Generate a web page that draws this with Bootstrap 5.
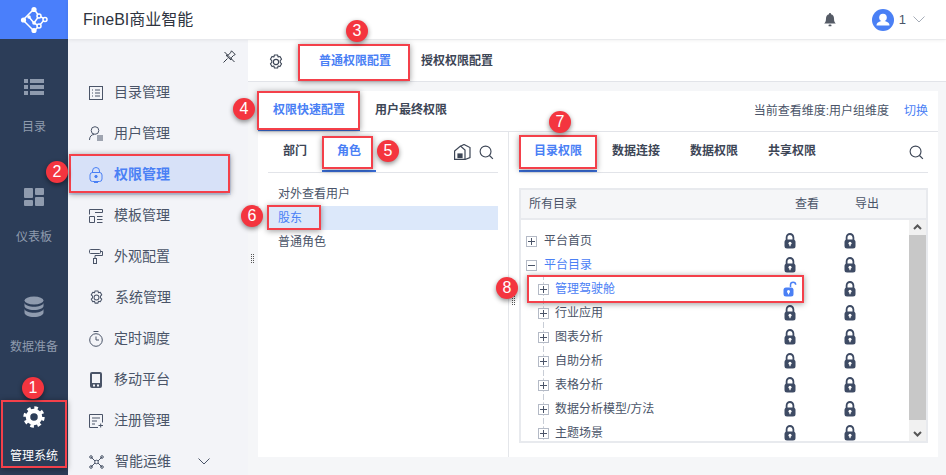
<!DOCTYPE html>
<html lang="zh-CN">
<head>
  <meta charset="UTF-8" />
  <meta name="viewport" content="width=device-width, initial-scale=1" />
  <title>FineBI商业智能</title>
  <link href="https://cdn.jsdelivr.net/npm/bootstrap@5.3.0/dist/css/bootstrap.min.css" rel="stylesheet" />
  <style>
    body {
      width: 946px;
      height: 475px;
      overflow: hidden;
      position: relative;
      background-color: #f5f6f8;
      color: #4a5468;
      font-family: "Liberation Sans", "Noto Sans CJK SC", sans-serif;
      font-size: 12px;
    }
    /* left dark rail */
    .rail { width: 68px; height: 475px; background-color: #2c3d58; flex: none; overflow: hidden; }
    .rail-logo { height: 39px; background-color: #4a7ffb; flex: none; }
    .rail-item { height: 110px; padding-top: 37px; color: #8f9bae; gap: 20px; flex: none; }
    .rail-item svg { height: 22px; }
    .rail-item.is-on { color: #fff; gap: 19px; }
    /* top bar */
    .topbar { height: 39px; background-color: #fff; box-shadow: 0 1px 4px rgba(0, 0, 0, .08); padding: 0 21px 0 15px; position: relative; z-index: 1; }
    .brand { font-size: 16px; color: #2e3440; }
    .bell-icon { margin-right: 20px; }
    .user-num { color: #4a5468; margin: 0 7px 0 5px; font-size: 13px; }
    /* second menu */
    .side-menu { width: 180px; height: 436px; background-color: #f3f4f8; flex: none; overflow: hidden; }
    .pin-row { height: 33px; padding: 11px 12px 0 0; }
    .menu-row { height: 41px; padding-left: 20px; gap: 11px; font-size: 14px; color: #4a5468; width: 162px; margin-left: 1px; }
    .menu-row svg { flex: none; }
    .menu-row.is-on { background-color: #d7e1f8; color: #4a80f5; font-weight: 700; }
    /* main part */
    .main-tabs { height: 42px; background-color: #fff; border-bottom: 1px solid #e2e4e9; padding: 2px 0 0 20px; margin-top: 1px; }
    .gear-btn { margin-right: 20px; color: #3d4656; }
    .tab-item { display: flex; align-items: center; justify-content: center; font-weight: 700; color: #3d4656; border-bottom: 2px solid transparent; height: 100%; }
    .tab-item.is-on { color: #4a80f5; border-bottom-color: #3a6fdc; }
    .tab-a { width: 102px; }
    .tab-b { width: 87px; padding-left: 15px; }
    .panel { margin: 9px 8px 0 10px; height: 366px; background-color: #fff; }
    .panel-head { height: 41px; border-bottom: 1px solid #e2e4e9; padding-right: 10px; }
    .panel-note { color: #4a5468; }
    .panel-link { color: #4a80f5; margin-left: 15px; }
    .col-left { width: 251px; border-right: 1px solid #e4e6ea; padding: 0 10px; flex: none; height: 325px; }
    .col-right { padding: 0 10px; flex: 1; min-width: 0; }
    .sub-tabs { height: 41px; border-bottom: 1px solid #e2e4e9; }
    .tab-dept { width: 54px; }
    .tab-role { width: 54px; }
    .tab-wide { width: 78px; }
    .tab-plain { width: 78px; }
    .tool-icon { color: #3d4656; }
    .role-row { height: 24px; padding-left: 10px; display: flex; align-items: center; color: #4a5468; }
    .role-list { padding-top: 9px; }
    .role-row.is-on { background-color: #dce8fa; color: #4a80f5; }
    /* tree table */
    .tree-box { margin-top: 15px; border: 2px solid #e8eaee; height: 255px; overflow: hidden; position: relative; }
    .tree-head { height: 30px; background-color: #f5f6f8; border-bottom: 2px solid #e8eaee; padding-left: 8px; padding-right: 29px; }
    .head-col { width: 60px; text-align: center; }
    .tree-body { padding: 9px 31px 0 0; width: 390px; }
    .tree-row { height: 24px; position: relative; }
    .tree-name { flex: 1; }
    .lvl-0 { padding-left: 5px; }
    .lvl-1 { padding-left: 17px; }
    .lvl-0 .tree-name { margin-left: 7px; }
    .lvl-1 .tree-name { margin-left: 6px; }
    .lvl-1::before { content: ""; position: absolute; left: 22px; top: 0; bottom: 0; border-left: 1px dashed #c8cdd6; }
    .expander { width: 11px; height: 11px; border: 1px solid #b4bac6; background-color: #fff; position: relative; flex: none; z-index: 1; }
    .expander::before { content: ""; position: absolute; left: 1px; right: 1px; top: 4px; height: 1px; background-color: #4a5468; }
    .expander.is-plus::after { content: ""; position: absolute; top: 1px; bottom: 1px; left: 4px; width: 1px; background-color: #4a5468; }
    .lock-col { width: 60px; text-align: center; line-height: 0; color: #3e4b64; }
    .name-blue { color: #4a80f5; }
    .scroll-track { position: absolute; right: 0; top: 30px; bottom: 0; width: 17px; background-color: #f1f1f1; }
    .scroll-thumb { position: absolute; left: 0; right: 0; top: 15px; height: 185px; background-color: #c8c8c8; }
    .scroll-up { position: absolute; top: 4px; left: 4px; }
    .scroll-down { position: absolute; bottom: 4px; left: 4px; }
    .grip { position: absolute; width: 3px; height: 9px; border-left: 1px dotted #555; border-right: 1px dotted #555; }
    .grip-a { left: 251px; top: 254px; }
    .grip-b { left: 512px; top: 296px; }
    /* red note boxes and numbers on top of the page */
    .note-box { position: absolute; border: 2px solid #f4404a; box-shadow: 0 1px 6px rgba(0, 0, 0, .4); z-index: 5; }
    .box-1 { left: 1px; top: 400px; width: 66px; height: 68px; }
    .box-2 { left: 69px; top: 154px; width: 161px; height: 39px; }
    .box-3 { left: 298px; top: 44px; width: 112px; height: 37px; }
    .box-4 { left: 257px; top: 91px; width: 103px; height: 39px; }
    .box-5 { left: 322px; top: 136px; width: 51px; height: 33px; }
    .box-6 { left: 267px; top: 205px; width: 54px; height: 25px; }
    .box-7 { left: 519px; top: 135px; width: 78px; height: 34px; }
    .box-8 { left: 527px; top: 275px; width: 277px; height: 28px; }
    .note-num { position: absolute; width: 22px; height: 22px; border-radius: 50%; background-color: #f4353f; color: #fff; font-size: 16px; line-height: 22px; text-align: center; box-shadow: 0 2px 5px rgba(0, 0, 0, .45); z-index: 6; }
    .num-1 { left: 22px; top: 377px; }
    .num-2 { left: 46px; top: 161px; }
    .num-3 { left: 346px; top: 20px; }
    .num-4 { left: 233px; top: 98px; }
    .num-5 { left: 377px; top: 140px; }
    .num-6 { left: 241px; top: 205px; }
    .num-7 { left: 549px; top: 111px; }
    .num-8 { left: 496px; top: 277px; }
  </style>
</head>
<body>
  <svg width="0" height="0" class="d-none">
    <symbol id="lock" viewBox="0 0 12 16">
      <path d="M2.6 7V4.4a3.4 3.4 0 0 1 6.8 0V7" fill="none" stroke="currentColor" stroke-width="1.8"/>
      <rect x="0.5" y="6.5" width="11" height="9" rx="2.5" fill="currentColor"/>
      <circle cx="6" cy="10.3" r="1.5" fill="#fff"/>
      <rect x="5.4" y="10.5" width="1.2" height="2.7" fill="#fff"/>
    </symbol>
    <symbol id="search" viewBox="0 0 16 16">
      <circle cx="7" cy="7" r="5.8" fill="none" stroke="currentColor" stroke-width="1.2"/>
      <path d="M11.2 11.2l3.6 3.6" stroke="currentColor" stroke-width="1.3"/>
    </symbol>
    <symbol id="thin-gear" viewBox="0 0 16 16">
      <path d="M6.4 1h3.2l.5 2 1.9-.6 1.6 2.8-1.4 1.4v1.800l1.400 1.400-1.600 2.800-1.900-.6-.5 2H6.400l-.5-2-1.900.6-1.600-2.800 1.400-1.400V6.600L2.400 5.200 4 2.400l1.900.6z" fill="none" stroke="currentColor" stroke-width="1.100" stroke-linejoin="round"/>
      <circle cx="8" cy="8" r="2.600" fill="none" stroke="currentColor" stroke-width="1.100"/>
    </symbol>
  </svg>

  <div class="d-flex">
    <!-- dark rail -->
    <div class="rail d-flex flex-column">
      <div class="rail-logo d-flex align-items-center justify-content-center">
        <svg width="28" height="28" viewBox="0 0 28 28" fill="none" stroke="#fff" stroke-width="1.500">
          <path d="M14 3L3 14l11 11M14 3l5 7-5 7-5-6M19 10l6 3-6 7-5-3M14 25l5-5"/>
          <g fill="#fff" stroke="none"><circle cx="14" cy="3.500" r="2.600"/><circle cx="3.500" cy="14" r="2.600"/><circle cx="14" cy="24.500" r="2.600"/><circle cx="9" cy="11" r="1.800"/><circle cx="14" cy="17" r="1.800"/></g>
          <g fill="#4a7ffb"><circle cx="19" cy="10" r="2"/><circle cx="25" cy="13.500" r="2"/><circle cx="19" cy="20" r="2"/></g>
        </svg>
      </div>
      <div class="rail-item d-flex flex-column align-items-center">
        <svg width="20" height="22" viewBox="0 0 20 22" fill="#8f9bae"><rect y="3" width="4" height="4"/><rect x="6" y="3" width="14" height="4"/><rect y="9" width="4" height="4"/><rect x="6" y="9" width="14" height="4"/><rect y="15" width="4" height="4"/><rect x="6" y="15" width="14" height="4"/></svg>
        <span>目录</span>
      </div>
      <div class="rail-item d-flex flex-column align-items-center">
        <svg width="20" height="22" viewBox="0 0 20 22" fill="#8f9bae"><rect y="2" width="9" height="10" rx="1"/><rect x="11" y="2" width="9" height="7" rx="1"/><rect y="14" width="9" height="6" rx="1"/><rect x="11" y="11" width="9" height="9" rx="1"/></svg>
        <span>仪表板</span>
      </div>
      <div class="rail-item d-flex flex-column align-items-center">
        <svg width="20" height="22" viewBox="0 0 20 22" fill="#8f9bae"><ellipse cx="10" cy="4.500" rx="9.500" ry="4"/><path d="M.5 7v3c0 2 4 4 9.500 4s9.500-2 9.500-4V7c-1 2.500-5 3.800-9.500 3.800S1.500 9.500.5 7z"/><path d="M.5 13v3.500c0 2.500 4 4.500 9.500 4.500s9.500-2 9.500-4.500V13c-1 2.500-5 3.800-9.500 3.800S1.500 15.500.5 13z"/></svg>
        <span>数据准备</span>
      </div>
      <div class="rail-item is-on d-flex flex-column align-items-center">
        <svg width="22" height="22" viewBox="0 0 22 22" fill="none" stroke="#fff"><circle cx="11" cy="11" r="6" stroke-width="4.500"/><circle cx="11" cy="11" r="9.200" stroke-width="3" stroke-dasharray="3.600 3.630"/></svg>
        <span>管理系统</span>
      </div>
    </div>

    <div class="flex-grow-1">
      <!-- top bar -->
      <div class="topbar d-flex align-items-center justify-content-between">
        <span class="brand">FineBI商业智能</span>
        <div class="d-flex align-items-center">
          <svg width="12" height="14" viewBox="0 0 12 14" fill="#555b66" class="bell-icon"><path d="M6 0a1 1 0 0 1 1 1.200C9 1.700 10 3.400 10 5.500c0 3 .8 4 1.800 5H.2c1-1 1.800-2 1.800-5 0-2.100 1-3.800 3-4.300A1 1 0 0 1 6 0z"/><rect x="4.500" y="11.500" width="3" height="1.800" rx=".9"/></svg>
          <svg width="22" height="22" viewBox="0 0 22 22" class="ms-3"><circle cx="11" cy="11" r="11" fill="#4a80f5"/><circle cx="11" cy="8.500" r="3.800" fill="#fff"/><path d="M4.500 16.500c0-3 3-4.500 6.500-4.500s6.500 1.500 6.500 4.500z" fill="#fff"/></svg>
          <span class="user-num">1</span>
          <svg width="12" height="7" viewBox="0 0 12 7" fill="none" stroke="#a6adb8"><path d="M.5.500l5.500 5.500L11.500.500"/></svg>
        </div>
      </div>

      <div class="d-flex">
        <!-- second menu -->
        <div class="side-menu">
          <div class="pin-row d-flex justify-content-end">
            <svg width="13" height="13" viewBox="0 0 13 13" fill="none" stroke="#333a46"><path d="M8.500.8l3.700 3.700-1.700 1-2.200 2.200-.3 2.300L3 5.300l2.300-.3 2.200-2.200zM4.500 8.500l-4 4M1.500 2l10 10"/></svg>
          </div>
          <div class="menu-row d-flex align-items-center">
            <svg width="14" height="14" viewBox="0 0 14 14" fill="none" stroke="#4a5468"><rect x=".5" y=".5" width="13" height="13"/><path d="M3 4h1M3 7h1M3 10h1M6 4h5M6 7h5M6 10h5"/></svg><span>目录管理</span>
          </div>
          <div class="menu-row d-flex align-items-center">
            <svg width="14" height="15" viewBox="0 0 14 15" fill="none" stroke="#4a5468"><circle cx="6" cy="4.500" r="3.800"/><path d="M.5 14c0-3.500 2-5.500 4.500-5.500M8 10h6M8 12h6M8 14h6"/></svg><span>用户管理</span>
          </div>
          <div class="menu-row is-on d-flex align-items-center">
            <svg width="14" height="16" viewBox="0 0 14 16" fill="none" stroke="#4a80f5"><path d="M3.500 6V4a3.500 3.500 0 0 1 7 0v2"/><rect x="1" y="5.500" width="12" height="9" rx="2.500"/><circle cx="7" cy="9.500" r="1.200" fill="#4a80f5"/><path d="M5 15.500h4"/></svg><span>权限管理</span>
          </div>
          <div class="menu-row d-flex align-items-center">
            <svg width="14" height="14" viewBox="0 0 14 14" fill="none" stroke="#4a5468"><path d="M.5 5.500V.500h13v3H6M.5 7.500h5v6h-5zM8 7.500h5.500M8 10.500h5.500M8 13.500h5.500"/></svg><span>模板管理</span>
          </div>
          <div class="menu-row d-flex align-items-center">
            <svg width="14" height="15" viewBox="0 0 14 15" fill="none" stroke="#4a5468"><rect x=".5" y=".5" width="11" height="4" rx="1"/><path d="M11.500 2.500h2v4H6v3"/><rect x="4.500" y="9.500" width="3" height="5"/></svg><span>外观配置</span>
          </div>
          <div class="menu-row d-flex align-items-center">
            <svg width="15" height="15"><use href="#thin-gear"/></svg><span>系统管理</span>
          </div>
          <div class="menu-row d-flex align-items-center">
            <svg width="14" height="16" viewBox="0 0 14 16" fill="none" stroke="#4a5468"><circle cx="7" cy="9" r="6.300"/><path d="M4.500.500h5M7 5.500V9h3"/></svg><span>定时调度</span>
          </div>
          <div class="menu-row d-flex align-items-center">
            <svg width="14" height="16" viewBox="0 0 14 16" fill="#4a5468"><path d="M3 0h8a2 2 0 0 1 2 2v12a2 2 0 0 1-2 2H3a2 2 0 0 1-2-2V2a2 2 0 0 1 2-2zm0 2v9h8V2zm1 10.500v2h2v-2zm4 0v2h2v-2z" fill-rule="evenodd"/></svg><span>移动平台</span>
          </div>
          <div class="menu-row d-flex align-items-center">
            <svg width="14" height="14" viewBox="0 0 14 14" fill="none" stroke="#4a5468"><path d="M9 13.500H.5V.500h13v8M3 4h8M3 7h5M3 10h3M9.500 11.500h4.500M11.700 9.500v4"/></svg><span>注册管理</span>
          </div>
          <div class="menu-row d-flex align-items-center">
            <svg width="15" height="14" viewBox="0 0 15 14" fill="none" stroke="#4a5468"><path d="M2 2l4 4M13 2L9 6M2 12l4-4M13 12L9 8"/><circle cx="7.500" cy="7" r="1.800"/><circle cx="2" cy="2" r="1.300"/><circle cx="13" cy="2" r="1.300"/><circle cx="2" cy="12" r="1.300"/><circle cx="13" cy="12" r="1.300"/></svg><span>智能运维</span>
            <svg width="12" height="7" viewBox="0 0 12 7" fill="none" stroke="#4a5468" class="ms-3"><path d="M.5.500l5.500 5.500L11.500.500"/></svg>
          </div>
        </div>

        <!-- main part -->
        <div class="flex-grow-1">
          <div class="main-tabs d-flex align-items-center">
            <svg width="16" height="16" class="gear-btn"><use href="#thin-gear"/></svg>
            <div class="tab-item tab-a is-on">普通权限配置</div>
            <div class="tab-item tab-b">授权权限配置</div>
          </div>

          <div class="panel">
            <div class="panel-head d-flex align-items-center">
              <div class="tab-item tab-a is-on">权限快速配置</div>
              <div class="tab-item tab-b">用户最终权限</div>
              <div class="ms-auto d-flex">
                <span class="panel-note">当前查看维度:用户组维度</span>
                <span class="panel-link">切换</span>
              </div>
            </div>

            <div class="d-flex">
              <div class="col-left">
                <div class="sub-tabs d-flex align-items-center">
                  <div class="tab-item tab-dept">部门</div>
                  <div class="tab-item tab-role is-on">角色</div>
                  <div class="ms-auto d-flex align-items-center gap-2 pe-1">
                    <svg width="17" height="16" viewBox="0 0 17 16" fill="none" stroke="#3d4656" stroke-width="1.200"><path d="M.6 7L6.500 2 11 6v9.400H.6zM7 2l3-1.500 6 3v10l-5 2"/><rect x="4" y="10" width="4" height="3.500" fill="#3d4656"/></svg>
                    <svg width="15" height="15" class="tool-icon"><use href="#search"/></svg>
                  </div>
                </div>
                <div class="role-list">
                  <div class="role-row">对外查看用户</div>
                  <div class="role-row is-on">股东</div>
                  <div class="role-row">普通角色</div>
                </div>
              </div>

              <div class="col-right">
                <div class="sub-tabs d-flex align-items-center">
                  <div class="tab-item tab-wide is-on">目录权限</div>
                  <div class="tab-item tab-plain">数据连接</div>
                  <div class="tab-item tab-plain">数据权限</div>
                  <div class="tab-item tab-plain">共享权限</div>
                  <svg width="15" height="15" class="ms-auto me-1 tool-icon"><use href="#search"/></svg>
                </div>

                <div class="tree-box">
                  <div class="tree-head d-flex align-items-center">
                    <span class="flex-grow-1">所有目录</span>
                    <span class="head-col">查看</span>
                    <span class="head-col">导出</span>
                  </div>
                  <div class="tree-body">
                    <div class="tree-row lvl-0 d-flex align-items-center">
                      <i class="expander is-plus"></i><span class="tree-name">平台首页</span>
                      <span class="lock-col"><svg width="12" height="16"><use href="#lock"/></svg></span>
                      <span class="lock-col"><svg width="12" height="16"><use href="#lock"/></svg></span>
                    </div>
                    <div class="tree-row lvl-0 d-flex align-items-center">
                      <i class="expander"></i><span class="tree-name name-blue">平台目录</span>
                      <span class="lock-col"><svg width="12" height="16"><use href="#lock"/></svg></span>
                      <span class="lock-col"><svg width="12" height="16"><use href="#lock"/></svg></span>
                    </div>
                    <div class="tree-row lvl-1 d-flex align-items-center">
                      <i class="expander is-plus"></i><span class="tree-name name-blue">管理驾驶舱</span>
                      <span class="lock-col">
                        <svg width="14" height="16" viewBox="0 0 14 16"><path d="M7.500 6V3.800a2.600 2.600 0 0 1 5.200 0" fill="none" stroke="#4a80f5" stroke-width="1.500"/><rect x=".5" y="6.500" width="10" height="9" rx="2.500" fill="#4a80f5"/><circle cx="5.500" cy="10.500" r="1.500" fill="#fff"/><rect x="4.900" y="10.500" width="1.200" height="2.800" fill="#fff"/></svg>
                      </span>
                      <span class="lock-col"><svg width="12" height="16"><use href="#lock"/></svg></span>
                    </div>
                    <div class="tree-row lvl-1 d-flex align-items-center">
                      <i class="expander is-plus"></i><span class="tree-name">行业应用</span>
                      <span class="lock-col"><svg width="12" height="16"><use href="#lock"/></svg></span>
                      <span class="lock-col"><svg width="12" height="16"><use href="#lock"/></svg></span>
                    </div>
                    <div class="tree-row lvl-1 d-flex align-items-center">
                      <i class="expander is-plus"></i><span class="tree-name">图表分析</span>
                      <span class="lock-col"><svg width="12" height="16"><use href="#lock"/></svg></span>
                      <span class="lock-col"><svg width="12" height="16"><use href="#lock"/></svg></span>
                    </div>
                    <div class="tree-row lvl-1 d-flex align-items-center">
                      <i class="expander is-plus"></i><span class="tree-name">自助分析</span>
                      <span class="lock-col"><svg width="12" height="16"><use href="#lock"/></svg></span>
                      <span class="lock-col"><svg width="12" height="16"><use href="#lock"/></svg></span>
                    </div>
                    <div class="tree-row lvl-1 d-flex align-items-center">
                      <i class="expander is-plus"></i><span class="tree-name">表格分析</span>
                      <span class="lock-col"><svg width="12" height="16"><use href="#lock"/></svg></span>
                      <span class="lock-col"><svg width="12" height="16"><use href="#lock"/></svg></span>
                    </div>
                    <div class="tree-row lvl-1 d-flex align-items-center">
                      <i class="expander is-plus"></i><span class="tree-name">数据分析模型/方法</span>
                      <span class="lock-col"><svg width="12" height="16"><use href="#lock"/></svg></span>
                      <span class="lock-col"><svg width="12" height="16"><use href="#lock"/></svg></span>
                    </div>
                    <div class="tree-row lvl-1 d-flex align-items-center">
                      <i class="expander is-plus"></i><span class="tree-name">主题场景</span>
                      <span class="lock-col"><svg width="12" height="16"><use href="#lock"/></svg></span>
                      <span class="lock-col"><svg width="12" height="16"><use href="#lock"/></svg></span>
                    </div>
                  </div>
                  <div class="scroll-track">
                    <svg width="9" height="6" viewBox="0 0 9 6" fill="none" stroke="#555" stroke-width="2" class="scroll-up"><path d="M1 5l3.500-3.500L8 5"/></svg>
                    <div class="scroll-thumb"></div>
                    <svg width="9" height="6" viewBox="0 0 9 6" fill="none" stroke="#555" stroke-width="2" class="scroll-down"><path d="M1 1l3.500 3.500L8 1"/></svg>
                  </div>
                </div>
              </div>
            </div>
          </div>
        </div>
      </div>
    </div>
  </div>

  <span class="grip grip-a"></span>
  <span class="grip grip-b"></span>

  <!-- numbered notes -->
  <div class="note-box box-1"></div>
  <div class="note-box box-2"></div>
  <div class="note-box box-3"></div>
  <div class="note-box box-4"></div>
  <div class="note-box box-5"></div>
  <div class="note-box box-6"></div>
  <div class="note-box box-7"></div>
  <div class="note-box box-8"></div>
  <span class="note-num num-1">1</span>
  <span class="note-num num-2">2</span>
  <span class="note-num num-3">3</span>
  <span class="note-num num-4">4</span>
  <span class="note-num num-5">5</span>
  <span class="note-num num-6">6</span>
  <span class="note-num num-7">7</span>
  <span class="note-num num-8">8</span>

  <script src="https://cdn.jsdelivr.net/npm/bootstrap@5.3.0/dist/js/bootstrap.bundle.min.js"></script>
</body>
</html>
